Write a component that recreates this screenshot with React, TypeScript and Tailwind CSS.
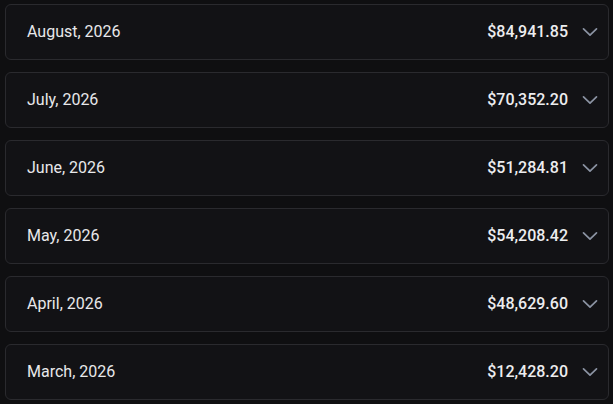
import React from "react";

const months = [
  { label: "August, 2026", total: "$84,941.85" },
  { label: "July, 2026", total: "$70,352.20" },
  { label: "June, 2026", total: "$51,284.81" },
  { label: "May, 2026", total: "$54,208.42" },
  { label: "April, 2026", total: "$48,629.60" },
  { label: "March, 2026", total: "$12,428.20" },
];

const Chevron = () => (
  <svg width="16" height="10" viewBox="0 0 16 10" fill="none" className="text-[#8b93a3]">
    <path d="M1.5 1.8 8 8.2 14.5 1.8" stroke="currentColor" strokeWidth="1.7" strokeLinecap="round" strokeLinejoin="round" />
  </svg>
);

export default function App() {
  return (
    <div
      className="min-h-screen bg-[#0f0f11] pt-[4px] pl-[5px] pr-[4px] flex flex-col gap-[12px]"
      style={{ fontFamily: "Roboto, 'Noto Sans', sans-serif" }}
    >
      {months.map((m) => (
        <div
          key={m.label}
          className="h-[56px] flex items-center justify-between rounded-[6px] border border-[#2a2a2e] bg-[#121215] pl-[21px] pr-[10px]"
        >
          <span className="text-[16px] text-[#e8e8ea]">{m.label}</span>
          <div className="flex items-center gap-[14px]">
            <span className="text-[16px] font-medium text-[#ededef]">{m.total}</span>
            <Chevron />
          </div>
        </div>
      ))}
    </div>
  );
}
